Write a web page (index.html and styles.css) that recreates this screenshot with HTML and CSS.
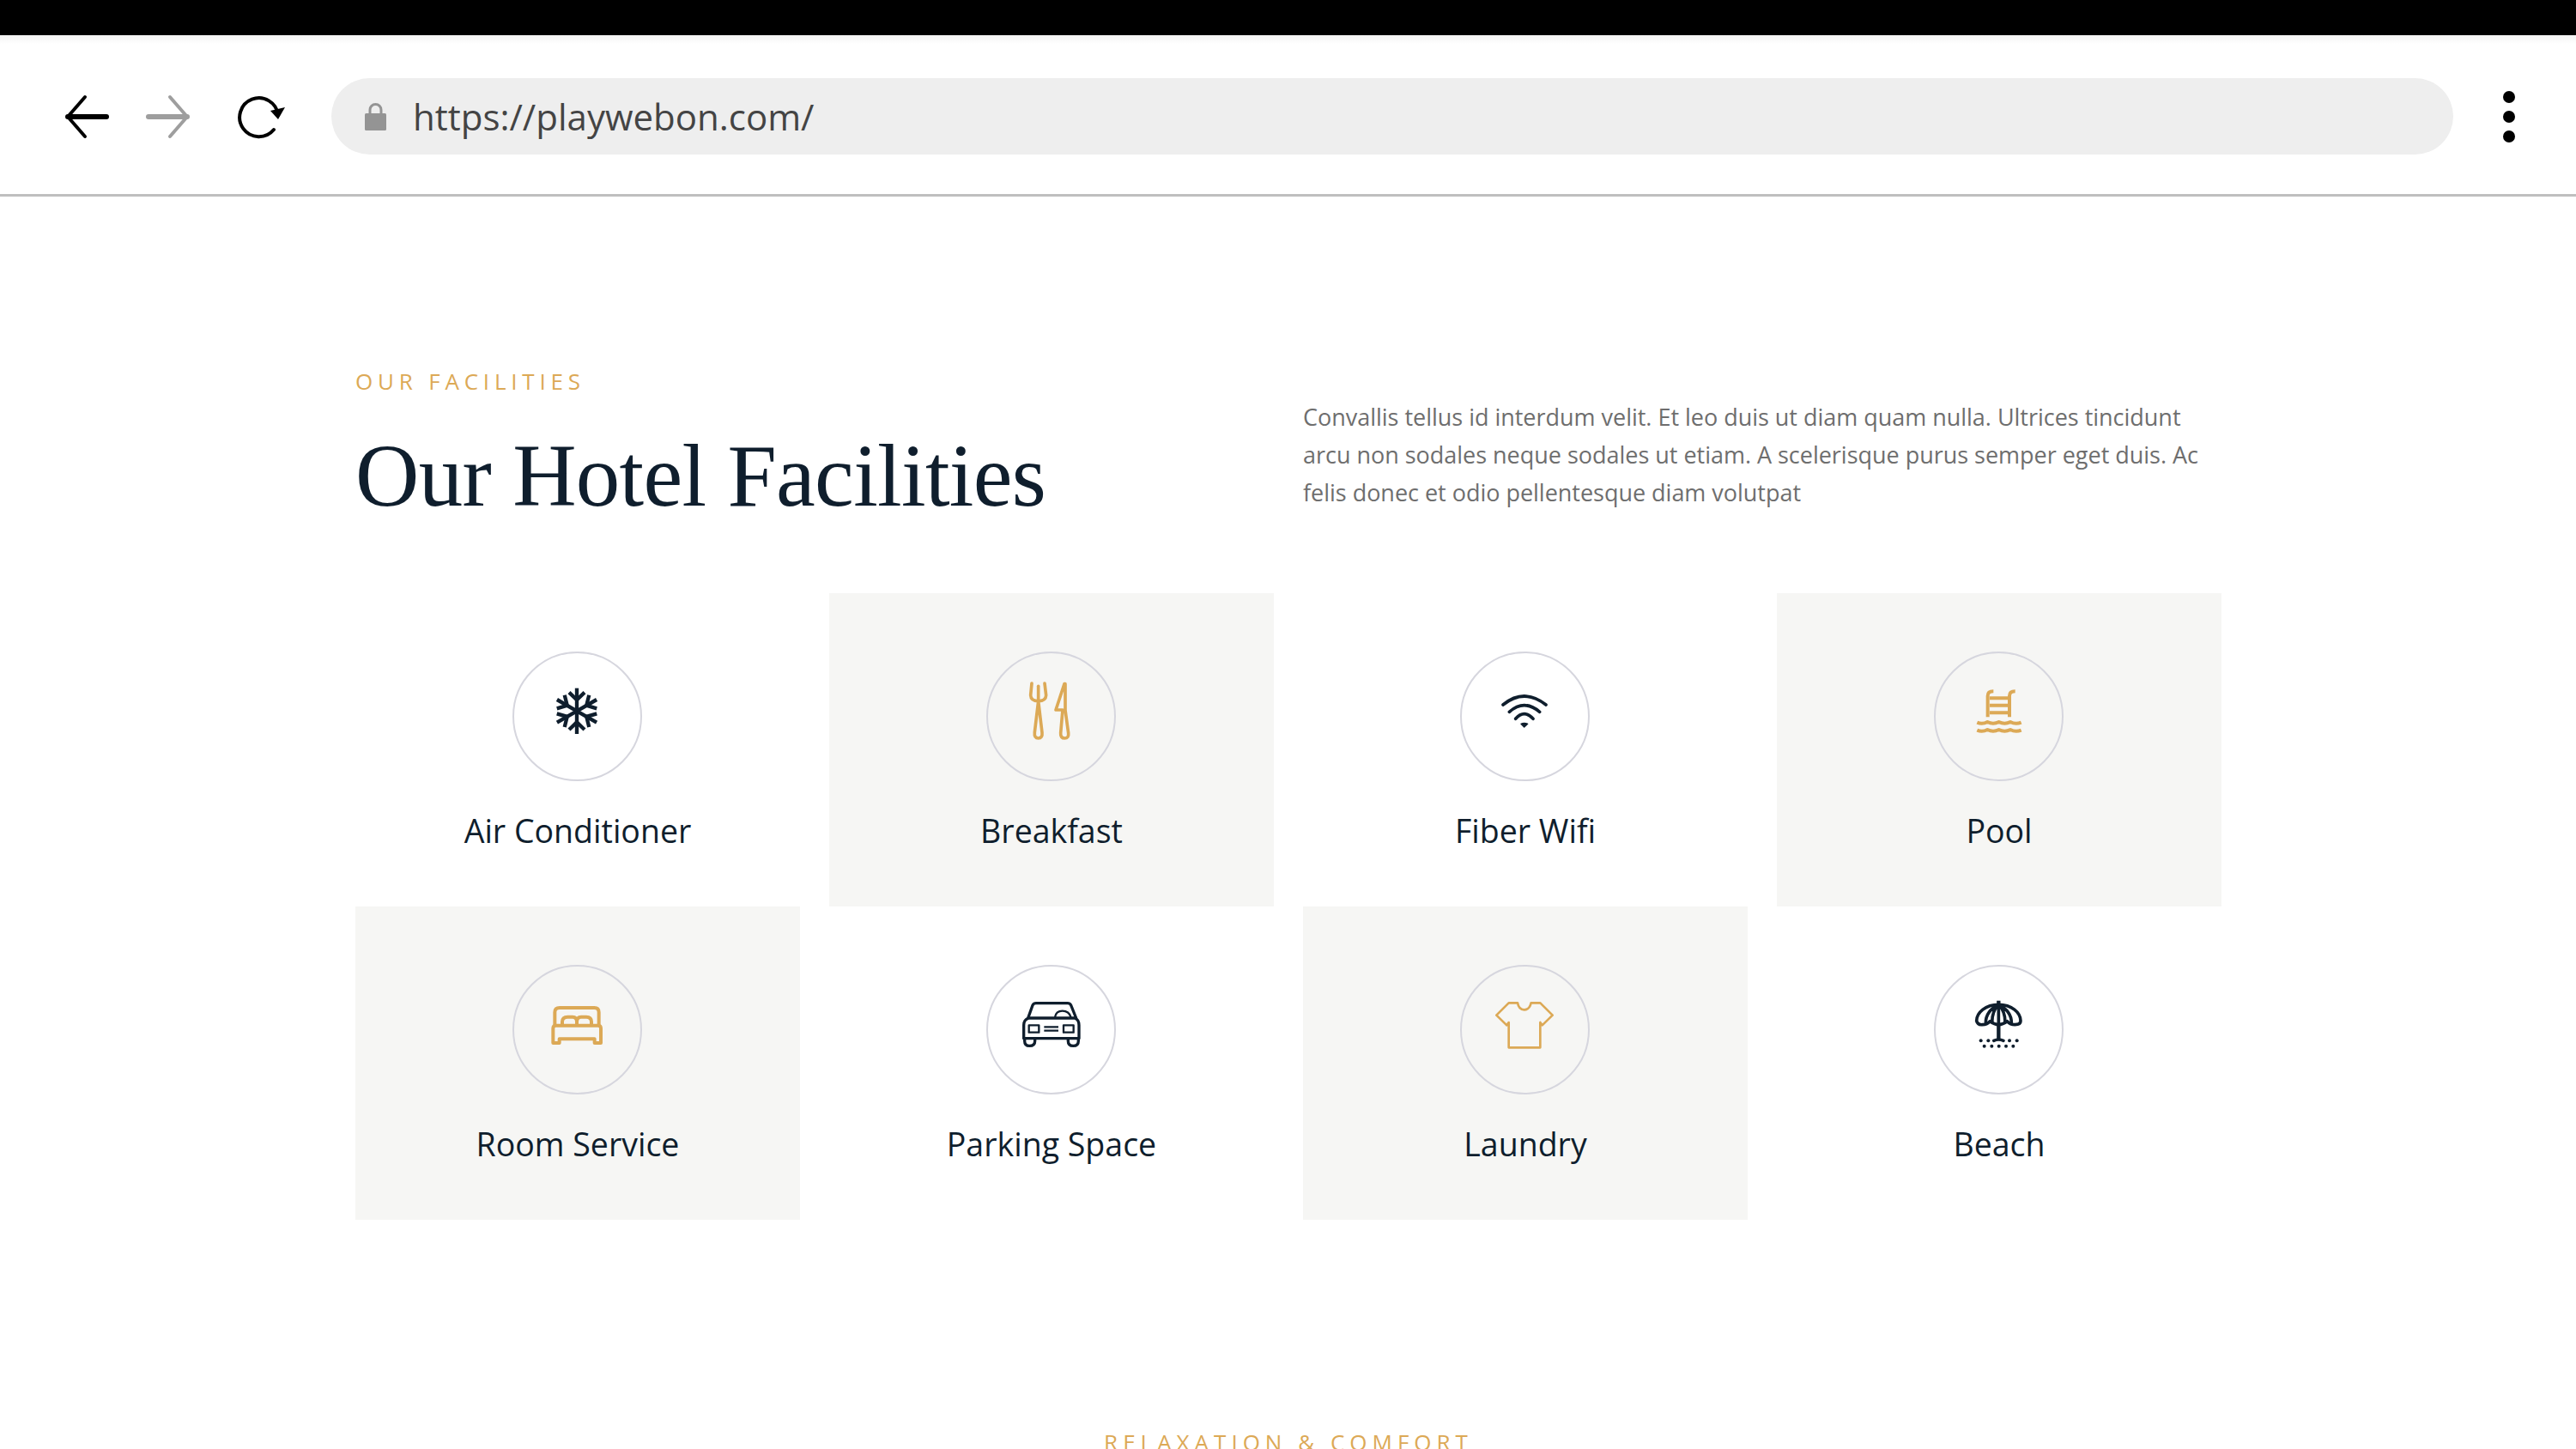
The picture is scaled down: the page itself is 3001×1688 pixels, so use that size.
FILE: index.html
```html
<!DOCTYPE html>
<html lang="en">
<head>
<meta charset="utf-8">
<title>Our Hotel Facilities</title>
<link rel="stylesheet" href="styles.css">
</head>
<body>
<header class="chrome">
  <div class="topbar"></div>
  <div class="toolbar">
    <svg class="nav-btn" viewBox="0 0 60 60"><path class="arrow-head" d="M28 7 L8 30 L28 53"/><path class="arrow-shaft" d="M8 30 H53"/></svg>
    <svg class="nav-btn nav-off" viewBox="0 0 60 60"><path class="arrow-head" d="M32 7 L52 30 L32 53"/><path class="arrow-shaft" d="M7 30 H52"/></svg>
    <svg class="nav-btn nav-reload" viewBox="0 0 60 60"><path class="arrow-head" d="M44 45 A22.500 22.500 0 1 1 49 28"/><path class="reload-tip" d="M40 23 L49 33 L57 19 Z"/></svg>
    <div class="urlbar">
      <svg class="lock" viewBox="0 0 25 33"><path class="lock-bow" d="M6 15 V9 A6.500 6.500 0 0 1 19 9 V15"/><rect class="lock-body" x="0" y="13" width="25" height="20" rx="1.500"/></svg>
      <span class="url">https://playwebon.com/</span>
    </div>
    <div class="menu"><i></i><i></i><i></i></div>
  </div>
</header>
<main class="page">
  <section class="intro">
    <div>
      <p class="eyebrow">OUR FACILITIES</p>
      <h1 class="title">Our Hotel Facilities</h1>
    </div>
    <p class="lede">Convallis tellus id interdum velit. Et leo duis ut diam quam nulla. Ultrices tincidunt arcu non sodales neque sodales ut etiam. A scelerisque purus semper eget duis. Ac felis donec et odio pellentesque diam volutpat</p>
  </section>
  <section class="grid">
    <article class="card">
      <div class="ring"><svg class="ico dark" viewBox="52 27 453 453">
        <g class="flake">
          <g id="arm"><path d="M277 235 V155"/><path d="M250 170 L277 196 L304 170"/></g>
          <use href="#arm" transform="rotate(60 277 235)"/><use href="#arm" transform="rotate(120 277 235)"/><use href="#arm" transform="rotate(180 277 235)"/><use href="#arm" transform="rotate(240 277 235)"/><use href="#arm" transform="rotate(300 277 235)"/>
        </g></svg></div>
      <h3 class="label">Air Conditioner</h3>
    </article>
    <article class="card shaded">
      <div class="ring"><svg class="ico gold s11" viewBox="56 27 453 453">
        <path d="M215 138 L211 180 Q212 200 238 200 Q264 200 265 180 L260 138"/><path d="M238 148 V200"/><path d="M238 200 L225 310 Q223 330 238 330 Q253 330 251 310 Z"/>
        <path d="M329 140 L299 231 H323 L316 312 Q315 330 330 330 Q345 330 343 312 L332 232 V140 Z"/></svg></div>
      <h3 class="label">Breakfast</h3>
    </article>
    <article class="card">
      <div class="ring"><svg class="ico dark s11" viewBox="65 27 453 453">
        <path d="M215 213 Q289 153 365 213"/><path d="M237 238 Q289 192 343 238"/><path d="M259 262 Q289 228 320 262"/><path class="solid" d="M278 280 Q289 274 301 280 L289 291 Z"/></svg></div>
      <h3 class="label">Fiber Wifi</h3>
    </article>
    <article class="card shaded">
      <div class="ring"><svg class="ico gold s12 flat" viewBox="69 27 453 453">
        <path d="M257 256 V182 Q257 166 277 166"/><path d="M333 256 V182 Q333 166 353 166"/><path d="M264 190 H330 M264 215 H330 M264 241 H330"/>
        <path d="M220 275 Q238 283 256 273 Q276 283 296 273 Q316 283 336 273 Q354 283 374 275"/><path d="M220 302 Q238 310 256 300 Q276 310 296 300 Q316 310 336 300 Q354 310 374 302"/></svg></div>
      <h3 class="label">Pool</h3>
    </article>
    <article class="card shaded">
      <div class="ring"><svg class="ico gold s12" viewBox="52 29 453 453">
        <path d="M200 240 V195 Q200 179 217 179 H338 Q354 179 354 195 V240"/><path d="M226 236 V228 Q226 211 245 211 H262 Q277 211 277 228 V236"/><path d="M277 228 Q277 211 292 211 H310 Q328 211 328 228 V236"/>
        <path d="M194 302 V251 Q194 241 204 241 H351 Q361 241 361 251 V302 H339 V288 H216 V302 Z"/></svg></div>
      <h3 class="label">Room Service</h3>
    </article>
    <article class="card">
      <div class="ring"><svg class="ico dark s10" viewBox="56 29 453 453">
        <path d="M202 215 L218 170 Q222 163 230 163 H340 Q348 163 352 170 L370 215"/><path d="M205 215 H365 Q380 220 380 240 V286 H187 V240 Q187 220 205 215 Z"/>
        <path d="M190 286 V295 Q190 312 207 312 Q226 312 226 295 V286"/><path d="M342 286 V295 Q342 312 360 312 Q378 312 378 295 V286"/>
        <rect class="thin" x="205" y="240" width="35" height="25"/><rect class="thin" x="326" y="240" width="35" height="25"/><path class="thin" d="M258 246 H308 M258 259 H308"/><path class="thin" d="M296 212 Q300 190 322 190 Q345 190 352 212"/></svg></div>
      <h3 class="label">Parking Space</h3>
    </article>
    <article class="card shaded">
      <div class="ring"><svg class="ico gold s8" viewBox="65 29 453 453">
        <path d="M235 162 H266 Q270 186 289 186 Q308 186 313 162 H345 L388 205 L352 240 L345 230 V318 H235 V230 L228 240 L192 205 Z"/></svg></div>
      <h3 class="label">Laundry</h3>
    </article>
    <article class="card">
      <div class="ring"><svg class="ico dark s11" viewBox="69 29 453 453">
        <path d="M295 168 C250 168 218 195 218 225 Q222 240 238 238 Q254 238 265 226 Q280 238 295 238 Q310 238 325 226 Q336 238 352 238 Q372 238 372 225 C372 195 340 168 295 168 Z"/>
        <path d="M295 168 Q250 190 250 232 M295 168 Q272 190 272 230 M295 168 V238 M295 168 Q318 190 318 230 M295 168 Q340 190 340 232"/>
        <path class="pole" d="M295 154 V170 M295 236 V292"/><path d="M278 294 Q295 286 312 294"/>
        <g class="solid"><circle cx="233" cy="294" r="6"/><circle cx="259" cy="294" r="6"/><circle cx="333" cy="294" r="6"/><circle cx="359" cy="294" r="6"/><circle cx="245" cy="313" r="6"/><circle cx="271" cy="313" r="6"/><circle cx="296" cy="313" r="6"/><circle cx="321" cy="313" r="6"/><circle cx="346" cy="313" r="6"/></g></svg></div>
      <h3 class="label">Beach</h3>
    </article>
  </section>
  <p class="eyebrow next">RELAXATION &amp; COMFORT</p>
</main>
</body>
</html>
```
FILE: styles.css
```css
* { box-sizing: border-box; }
html, body { margin: 0; height: 1688px; overflow: hidden; background: #fff; }
body { font-family: "Open Sans", "Noto Sans", sans-serif; color: #0f1e2d; }

.topbar { height: 41px; background: #000; }
.toolbar {
  height: 188px;
  display: flex;
  align-items: center;
  padding: 4px 71px 0 71px;
  background: linear-gradient(#f3f3f3, #fff 10px);
  border-bottom: 3px solid #bfbfbf;
}
.nav-btn { width: 60px; height: 60px; flex: none; margin-right: 35px; }
.nav-reload { margin-left: 14px; margin-right: 51px; }
.arrow-head { fill: none; stroke: #000; stroke-width: 4; stroke-linecap: round; stroke-linejoin: round; }
.arrow-shaft { fill: none; stroke: #000; stroke-width: 6; stroke-linecap: round; }
.nav-off .arrow-head, .nav-off .arrow-shaft { stroke: #9e9e9e; }
.reload-tip { fill: #000; }
.urlbar {
  flex: 1;
  height: 89px;
  display: flex;
  align-items: center;
  padding-left: 39px;
  background: #eeeeee;
  border-radius: 45px;
}
.lock { width: 25px; height: 33px; margin-right: 31px; flex: none; }
.lock-bow { fill: none; stroke: #949494; stroke-width: 3; }
.lock-body { fill: #949494; }
.url { font-size: 42px; color: #444; white-space: nowrap; }
.menu { margin-left: 58px; display: flex; flex-direction: column; gap: 9px; }
.menu i { display: block; width: 14px; height: 14px; border-radius: 50%; background: #000; }

.page { padding: 198px 413px 0 414px; }
.intro { display: grid; grid-template-columns: 1070px 1070px; column-gap: 34px; height: 264px; }
.eyebrow { margin: 0; font-size: 26px; line-height: 34px; letter-spacing: 5.800px; color: #dca956; }
.title {
  margin: 28px 0 0;
  font-family: "Liberation Serif", "Times New Roman", serif;
  font-weight: 400;
  font-size: 103px;
  line-height: 130px;
  letter-spacing: -0.700px;
  color: #0f1e2d;
}
.lede { margin: 37px 0 0; font-size: 27px; line-height: 44px; letter-spacing: -0.020px; color: #6e6e6e; }

.grid { display: grid; grid-template-columns: repeat(4, 518px); column-gap: 34px; grid-auto-rows: 365px; }
.card { display: flex; flex-direction: column; align-items: center; padding-top: 68px; }
.shaded { background: #f6f6f4; }
.ring { width: 151px; height: 151px; margin-left: -1px; border-radius: 50%; border: 2px solid #d6d6de; flex: none; position: relative; }
.ico { position: absolute; left: -2px; top: -2px; width: 151px; height: 151px; fill: none; stroke-linecap: round; stroke-linejoin: round; }
.dark { stroke: #0f1e2d; }
.gold { stroke: #dca956; }
.s8 { stroke-width: 8; }
.s10 { stroke-width: 10; }
.s11 { stroke-width: 11; }
.s12 { stroke-width: 12; }
.flat { stroke-linecap: butt; }
.flake { stroke-width: 13; stroke-linecap: butt; stroke-linejoin: miter; }
.solid { fill: #0f1e2d; stroke-width: 0; }
path.solid { fill: #0f1e2d; stroke-width: 4; }
.thin { stroke-width: 7; stroke-linecap: butt; }
.pole { stroke-width: 13; stroke-linecap: butt; }
.label { margin: 33px 0 0; font-size: 37.500px; line-height: 50px; font-weight: 500; color: #0f1e2d; }

.next { padding-top: 242px; text-align: center; letter-spacing: 6px; }
```
